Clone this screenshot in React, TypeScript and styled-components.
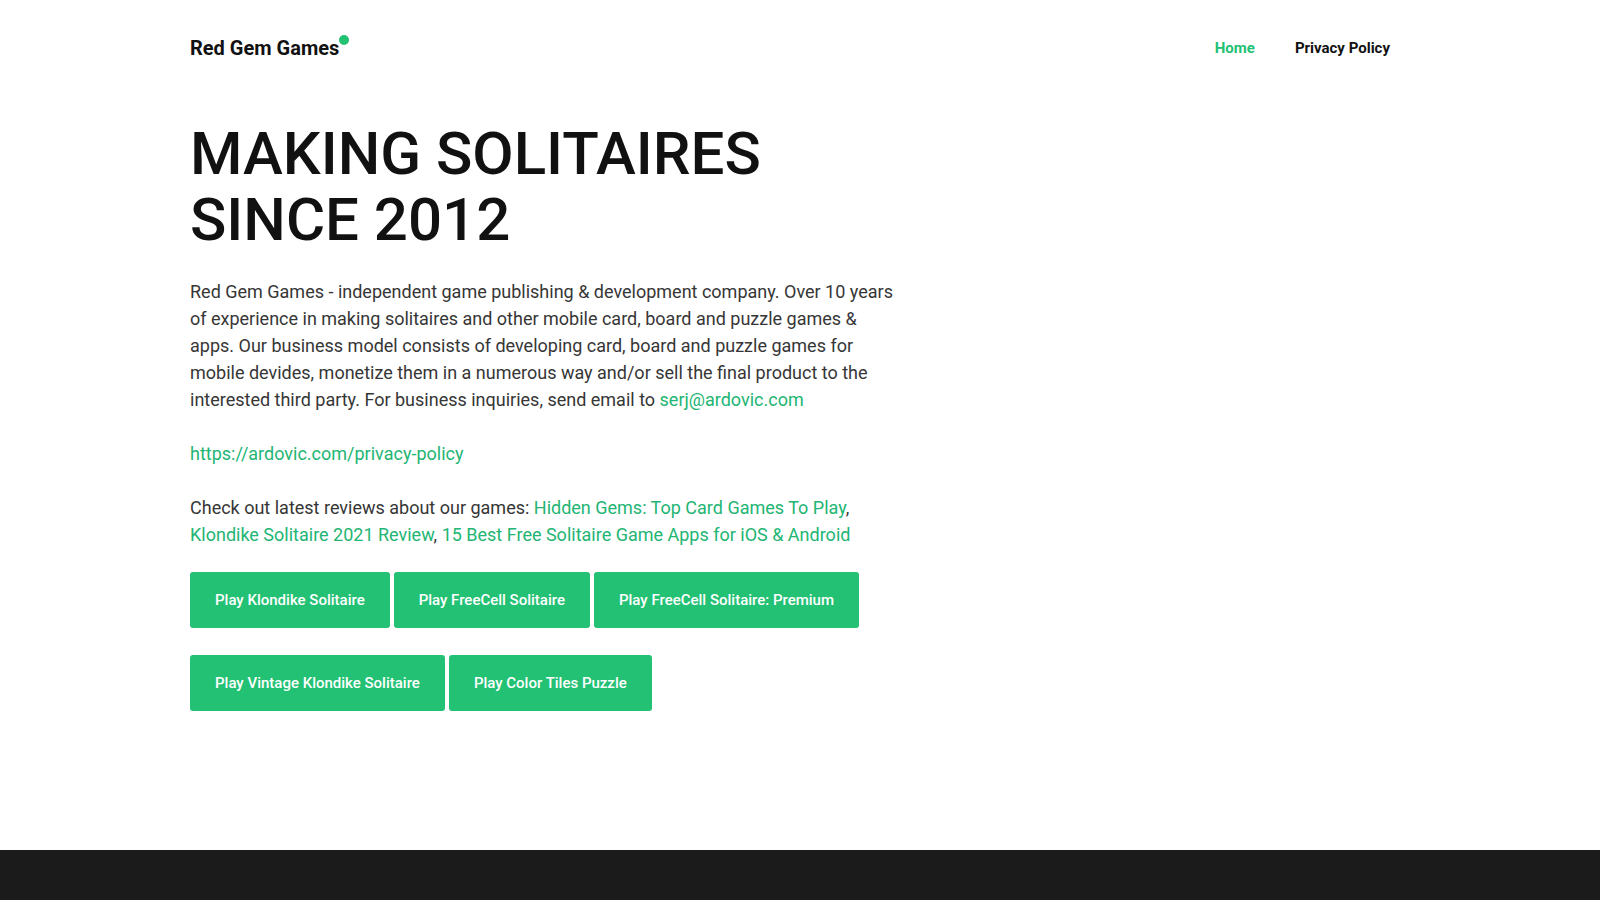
import React from "react";
import styled, { createGlobalStyle } from "styled-components";

const GlobalStyle = createGlobalStyle`
  html, body {
    margin: 0;
    padding: 0;
    background: #fff;
  }
  body {
    font-family: Roboto, "Liberation Sans", sans-serif;
    color: #333;
  }
  * {
    box-sizing: border-box;
  }
`;

const Page = styled.div`
  min-height: 900px;
  display: flex;
  flex-direction: column;
`;

const Container = styled.div`
  width: 1220px;
  margin: 0 auto;
`;

const Header = styled.header`
  display: flex;
  align-items: center;
  justify-content: space-between;
  height: 94px;
  padding-top: 1px;
`;

const Logo = styled.a`
  position: relative;
  font-size: 20px;
  font-weight: 700;
  color: #111;
  text-decoration: none;
  margin-top: 1px;

  &::after {
    content: "";
    position: absolute;
    right: -10px;
    top: -1px;
    width: 10px;
    height: 10px;
    border-radius: 50%;
    background: #22c174;
  }
`;

const Nav = styled.nav`
  display: flex;
`;

const NavLink = styled.a<{ $active?: boolean }>`
  padding: 0 20px;
  font-size: 15px;
  font-weight: 700;
  color: ${(p) => (p.$active ? "#22c174" : "#111")};
  text-decoration: none;
`;

const Main = styled.main`
  flex: 1;
  padding-top: 27px;
`;

const Title = styled.h1`
  margin: 0 0 25px;
  font-size: 60px;
  line-height: 66px;
  font-weight: 500;
  color: #111;
`;

const Body = styled.div`
  width: 710px;
  font-size: 18px;
  line-height: 27px;
  color: #363636;

  p {
    margin: 0 0 27px;
  }

  p:last-child {
    margin-bottom: 24px;
  }
`;

const Link = styled.a`
  color: #22b573;
  text-decoration: none;
`;

const Buttons = styled.div`
  display: flex;
  flex-wrap: wrap;
  width: 710px;
  column-gap: 4px;
  row-gap: 27px;
`;

const PlayButton = styled.a`
  display: inline-block;
  padding: 18px 25px;
  line-height: 20px;
  font-size: 15px;
  font-weight: 500;
  color: #fff;
  background: #22c174;
  border-radius: 3px;
  text-decoration: none;
`;

const Footer = styled.footer`
  height: 50px;
  background: #1b1b1b;
`;

const games = [
  "Play Klondike Solitaire",
  "Play FreeCell Solitaire",
  "Play FreeCell Solitaire: Premium",
  "Play Vintage Klondike Solitaire",
  "Play Color Tiles Puzzle",
];

export default function App() {
  return (
    <Page>
      <GlobalStyle />
      <Container>
        <Header>
          <Logo href="#">Red Gem Games</Logo>
          <Nav>
            <NavLink href="#" $active>
              Home
            </NavLink>
            <NavLink href="#">Privacy Policy</NavLink>
          </Nav>
        </Header>
      </Container>
      <Main>
        <Container>
          <Title>
            MAKING SOLITAIRES
            <br />
            SINCE 2012
          </Title>
          <Body>
            <p>
              Red Gem Games - independent game publishing &amp; development
              company. Over 10 years of experience in making solitaires and
              other mobile card, board and puzzle games &amp; apps. Our business
              model consists of developing card, board and puzzle games for
              mobile devides, monetize them in a numerous way and/or sell the
              final product to the interested third party. For business
              inquiries, send email to{" "}
              <Link href="#">serj@ardovic.com</Link>
            </p>
            <p>
              <Link href="#">https://ardovic.com/privacy-policy</Link>
            </p>
            <p>
              Check out latest reviews about our games:{" "}
              <Link href="#">Hidden Gems: Top Card Games To Play</Link>,{" "}
              <Link href="#">Klondike Solitaire 2021 Review</Link>,{" "}
              <Link href="#">15 Best Free Solitaire Game Apps for iOS &amp; Android</Link>
            </p>
          </Body>
          <Buttons>
            {games.map((g) => (
              <PlayButton key={g} href="#">
                {g}
              </PlayButton>
            ))}
          </Buttons>
        </Container>
      </Main>
      <Footer />
    </Page>
  );
}
